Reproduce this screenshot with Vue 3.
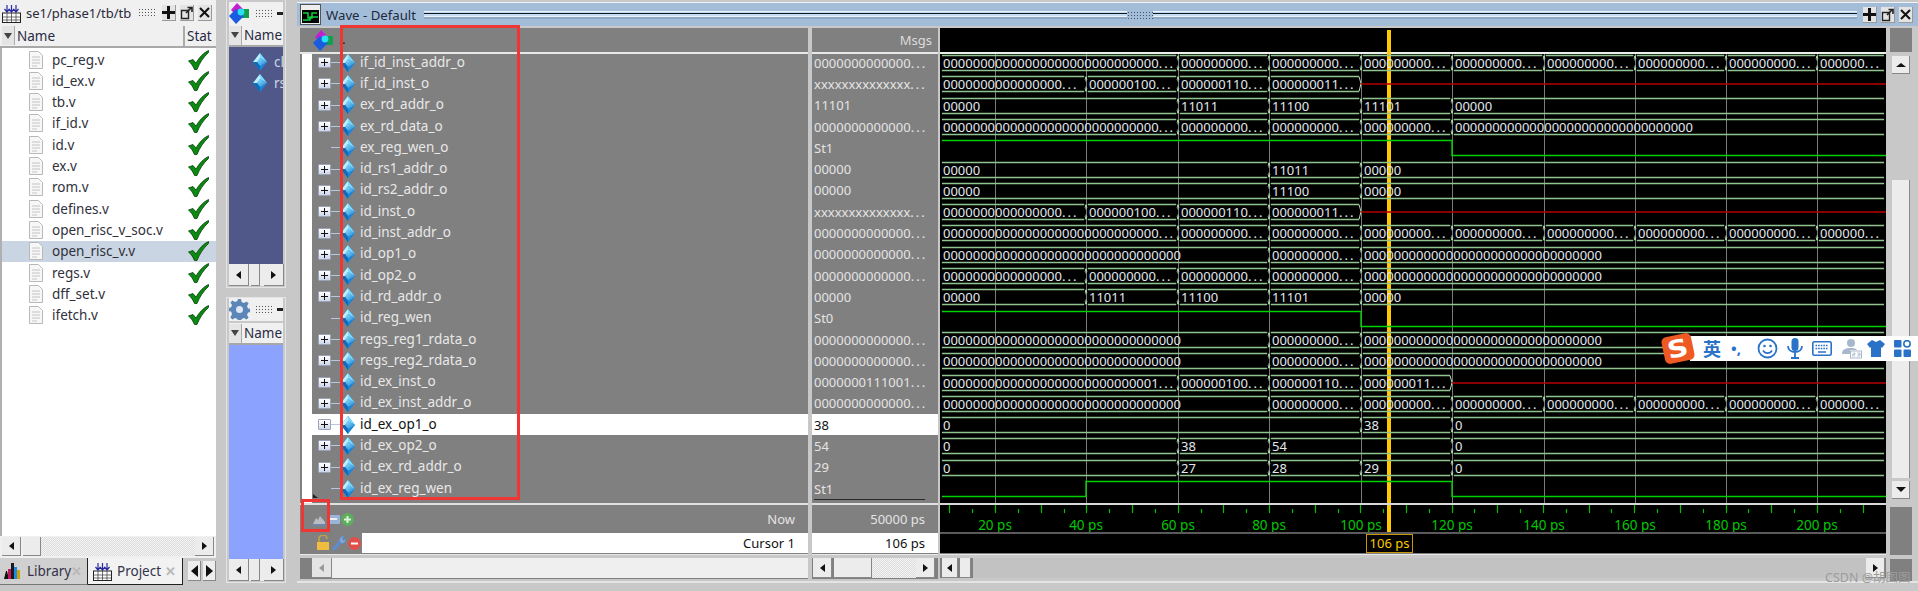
<script setup>
const X = { A: 940, B: 1086, C: 1178, D: 1269, E: 1361, F: 1452, G: 1544, H: 1635, I: 1726, J: 1817, Z: 1886 }
const z = (n) => '0'.repeat(n)
const e9 = z(9) + '...'
const e28 = z(29) + '...'
const e16 = z(16) + '...'
const full = z(32)
const valZ = z(13) + '...'
const valX = 'x'.repeat(14) + '...'

const addrSegs = [['A', e28], ['C', e9], ['D', e9], ['E', e9], ['F', e9], ['G', e9], ['H', e9], ['I', e9], ['J', '000000...']]
const instSegs = [['A', e16], ['B', '000000100...'], ['C', '000000110...'], ['D', '000000011...']]

const defs = [
  { name: 'if_id_inst_addr_o', val: valZ, segs: addrSegs },
  { name: 'if_id_inst_o', val: valX, segs: instSegs, red: 'E' },
  { name: 'ex_rd_addr_o', val: '11101', segs: [['A', '00000'], ['C', '11011'], ['D', '11100'], ['E', '11101'], ['F', '00000']] },
  { name: 'ex_rd_data_o', val: valZ, segs: [['A', e28], ['C', e9], ['D', e9], ['E', e9], ['F', full]] },
  { name: 'ex_reg_wen_o', val: 'St1', bit: [['A', 1], ['F', 0]] },
  { name: 'id_rs1_addr_o', val: '00000', segs: [['A', '00000'], ['D', '11011'], ['E', '00000']] },
  { name: 'id_rs2_addr_o', val: '00000', segs: [['A', '00000'], ['D', '11100'], ['E', '00000']] },
  { name: 'id_inst_o', val: valX, segs: instSegs, red: 'E' },
  { name: 'id_inst_addr_o', val: valZ, segs: addrSegs },
  { name: 'id_op1_o', val: valZ, segs: [['A', full], ['D', e9], ['E', full]] },
  { name: 'id_op2_o', val: valZ, segs: [['A', e16], ['B', e9], ['C', e9], ['D', e9], ['E', full]] },
  { name: 'id_rd_addr_o', val: '00000', segs: [['A', '00000'], ['B', '11011'], ['C', '11100'], ['D', '11101'], ['E', '00000']] },
  { name: 'id_reg_wen', val: 'St0', bit: [['A', 1], ['E', 0]] },
  { name: 'regs_reg1_rdata_o', val: valZ, segs: [['A', full], ['D', e9], ['E', full]] },
  { name: 'regs_reg2_rdata_o', val: valZ, segs: [['A', full], ['D', e9], ['E', full]] },
  { name: 'id_ex_inst_o', val: '0000000111001...', segs: [['A', z(28) + '1...'], ['C', '000000100...'], ['D', '000000110...'], ['E', '000000011...']], red: 'F' },
  { name: 'id_ex_inst_addr_o', val: valZ, segs: [['A', full], ['D', e9], ['E', e9], ['F', e9], ['G', e9], ['H', e9], ['I', e9], ['J', '000000...']] },
  { name: 'id_ex_op1_o', val: '38', sel: true, segs: [['A', '0'], ['E', '38'], ['F', '0']] },
  { name: 'id_ex_op2_o', val: '54', segs: [['A', '0'], ['C', '38'], ['D', '54'], ['F', '0']] },
  { name: 'id_ex_rd_addr_o', val: '29', segs: [['A', '0'], ['C', '27'], ['D', '28'], ['E', '29'], ['F', '0']] },
  { name: 'id_ex_reg_wen', val: 'St1', bit: [['A', 0], ['B', 1], ['F', 0]] }
]

function split(t) {
  return t.endsWith('...') ? { body: t.slice(0, -3), dots: '...' } : { body: t, dots: '' }
}

const rows = defs.map((d, i) => {
  const top = Math.round(55 + 21.3 * i) + 0.5
  const bot = top + 15
  const out = { ...d, key: d.name, valText: split(d.val), hasPlus: !d.bit }
  if (d.bit) {
    let p = ''
    d.bit.forEach(([k, v], j) => {
      const y = v ? top : bot
      const x1 = j === 0 ? X.A + 2 : X[k]
      const x2 = j === d.bit.length - 1 ? X.Z : X[d.bit[j + 1][0]]
      p += (j === 0 ? 'M' : 'L') + x1 + ' ' + y + ' L' + x2 + ' ' + y + ' '
    })
    out.bitPath = p
    return out
  }
  const end = d.red ? X[d.red] : X.Z
  let line = ''
  let tick = ''
  const labels = []
  d.segs.forEach(([k, text], j) => {
    const x1 = X[k]
    const x2 = j === d.segs.length - 1 ? end : X[d.segs[j + 1][0]]
    const l = x1 + 2
    line += `M${l} ${top} L${x2 - 2} ${top} M${l} ${bot} L${x2 - 2} ${bot} `
    if (j > 0) tick += `M${x1 - 1} ${top} L${x1 + 1} ${top + 3} M${x1 + 1} ${top} L${x1 - 1} ${top + 3} M${x1} ${top + 2} L${x1} ${top + 5} M${x1 - 1} ${bot} L${x1 + 1} ${bot - 3} M${x1 + 1} ${bot} L${x1 - 1} ${bot - 3} M${x1} ${bot - 2} L${x1} ${bot - 5} `
    labels.push({ x: x1 + 3, y: bot - 3, ...split(text) })
  })
  if (d.red) tick += `M${end - 2} ${top} L${end} ${top + 7} L${end - 2} ${bot} `
  out.line = line
  out.tick = tick
  out.labels = labels
  out.redPath = d.red ? `M${end} ${top + 7.5} L${X.Z} ${top + 7.5}` : ''
  return out
})

const files = ['pc_reg.v', 'id_ex.v', 'tb.v', 'if_id.v', 'id.v', 'ex.v', 'rom.v', 'defines.v', 'open_risc_v_soc.v', 'open_risc_v.v', 'regs.v', 'dff_set.v', 'ifetch.v']
const grid = [995, 1086, 1178, 1269, 1361, 1452, 1544, 1635, 1726, 1817]
const gridLabels = grid.map((x, i) => ({ x, text: (i + 1) * 20 + ' ps' }))
const ticks = []
for (let n = 0; n < 41; n++) ticks.push({ x: Math.round(949.4 + 22.83 * n) + 0.5, long: n % 2 === 0 })
</script>

<template>
  <div class="app">
    <svg class="defs" width="0" height="0" aria-hidden="true">
      <defs>
        <linearGradient id="dg" x1="0" y1="0" x2="1" y2="1">
          <stop offset="0" stop-color="#8fe4ff" />
          <stop offset="1" stop-color="#1d7fd0" />
        </linearGradient>
        <symbol id="diamond" viewBox="0 0 14 18">
          <path d="M7 0 L14 9 L7 18 L0 9Z" fill="#1a86d8" />
          <path d="M7 0 L14 9 L7 5Z" fill="#7edcff" />
          <path d="M7 0 L0 9 L4 9 L7 5Z" fill="#bdf0ff" />
          <path d="M4 9 L7 5 L14 9 L7 13Z" fill="url(#dg)" />
          <path d="M0 9 L7 18 L7 13 L4 9Z" fill="#0f6cb8" />
        </symbol>
        <symbol id="trio" viewBox="0 0 21 21">
          <path d="M8 0 L15 7 L8 13 L2 7Z" fill="#c020d0" />
          <rect x="10" y="6" width="10" height="9" fill="#12a050" />
          <path d="M7 6 L15 13 L7 21 L0 13Z" fill="#1a5ce0" />
          <circle cx="12" cy="9" r="3.4" fill="#27e0f0" />
        </symbol>
        <symbol id="plusb" viewBox="0 0 13 15">
          <path d="M5 1h3v5h5v3H8v5H5V9H0V6h5z" fill="#111" />
        </symbol>
        <symbol id="popb" viewBox="0 0 13 15">
          <path d="M1.5 5.5h7v8h-7z" fill="none" stroke="#222" stroke-width="1.4" />
          <path d="M6 8 L11 3 M7.5 2.5h4.5v4.5" fill="none" stroke="#222" stroke-width="1.6" />
        </symbol>
        <symbol id="xb" viewBox="0 0 13 15">
          <path d="M2 3 L11 12 M11 3 L2 12" fill="none" stroke="#111" stroke-width="2" />
        </symbol>
        <symbol id="check" viewBox="0 0 21 20">
          <path d="M0.5 11 L5 9.5 L8 13 C11 8 15 3 20.5 0.5 L20.5 2.5 C15.5 7 11.5 13 9 19.5 L6.5 19.5 C5 16 3 13 0.5 11Z" fill="#0b8a12" stroke="#063d08" stroke-width="0.8" />
        </symbol>
        <symbol id="file" viewBox="0 0 14 18">
          <path d="M.5.5h9l4 4v13H.5z" fill="#f7f7f7" stroke="#b9b9b9" />
          <path d="M3 6h8M3 9h8M3 12h8M3 15h5" stroke="#c4c4c4" />
        </symbol>
        <symbol id="proj" viewBox="0 0 19 19">
          <rect x=".5" y="9" width="18" height="9.5" fill="#fff" stroke="#222" />
          <path d="M.5 13h18M.5 16h18M5 9v9M9.5 9v9M14 9v9" stroke="#333" stroke-width=".7" />
          <path d="M5 1v6M2.5 5L5 8l2.5-3M14 1v6M11.5 5L14 8l2.5-3M9.5 1v6M7 5l2.5 3L12 5" fill="none" stroke="#2a2aa0" stroke-width="1.2" />
        </symbol>
      </defs>
    </svg>

    <!-- left project panel -->
    <section class="left">
      <div class="ptitle">
        <svg class="ticon" width="19" height="19"><use href="#proj" /></svg>
        <span class="ttext">se1/phase1/tb/tb</span>
        <span class="grip leftgrip"></span>
        <span class="wbtn"><svg width="13" height="15"><use href="#plusb" /></svg></span>
        <span class="wbtn"><svg width="13" height="15"><use href="#popb" /></svg></span>
        <span class="wbtn"><svg width="13" height="15"><use href="#xb" /></svg></span>
      </div>
      <div class="phead">
        <span class="sortbox"><i></i></span>
        <span class="hname hfull">Name</span>
        <span class="hname hstat">Stat</span>
      </div>
      <div class="flist">
        <div v-for="f in files" :key="f" class="frow" :class="{ fsel: f === 'open_risc_v.v' }">
          <svg class="ficon" width="14" height="18"><use href="#file" /></svg>
          <span class="fname">{{ f }}</span>
          <svg class="fcheck" width="21" height="20"><use href="#check" /></svg>
        </div>
      </div>
      <div class="hbar leftbar">
        <span class="sbtn"><i class="al"></i></span>
        <span class="thumb t18"></span>
        <span class="dither"></span>
        <span class="sbtn"><i class="ar"></i></span>
      </div>
      <div class="tabs">
        <div class="tab tlib">
          <svg width="19" height="18" viewBox="0 0 19 18">
            <path d="M1 17l2-8h1l2 8z" fill="#111" />
            <rect x="5" y="7" width="3" height="10" fill="#c2185b" />
            <rect x="8" y="1" width="3" height="16" fill="#1a1a1a" />
            <rect x="11" y="5" width="3" height="12" fill="#1e88e5" />
            <rect x="14" y="8" width="3" height="9" fill="#d4a000" />
          </svg>
          <span class="tname">Library</span>
          <span class="tclose">✕</span>
        </div>
        <div class="tab tproj">
          <svg width="19" height="19"><use href="#proj" /></svg>
          <span class="tname">Project</span>
          <span class="tclose">✕</span>
        </div>
        <div class="tabarrows">
          <span class="tarrow"><i class="al big"></i></span>
          <span class="tarrow"><i class="ar big"></i></span>
        </div>
      </div>
    </section>

    <!-- middle column -->
    <section class="mid">
      <div class="mpanel top">
        <div class="ptitle mtitle">
          <svg width="21" height="21"><use href="#trio" /></svg>
          <span class="grip midgrip"></span>
          <span class="minib"></span>
        </div>
        <div class="phead mhead">
          <span class="sortbox"><i></i></span>
          <span class="hname hfull">Name</span>
        </div>
        <div class="navy">
          <div class="mrow"><svg width="18" height="18"><use href="#diamond" /></svg><span>clk</span></div>
          <div class="mrow"><svg width="18" height="18"><use href="#diamond" /></svg><span>rst</span></div>
        </div>
        <div class="hbar midbar">
          <span class="sbtn"><i class="al"></i></span>
          <span class="thumb t8"></span>
          <span class="sbtn"><i class="ar"></i></span>
        </div>
      </div>
      <div class="mpanel bottom">
        <div class="ptitle mtitle">
          <svg width="21" height="21" viewBox="0 0 21 21">
            <path d="M9 0h3l.6 3 2.4 1 2.6-1.6 2 2L18 7l1 2.400 3 .6v3l-3 .6-1 2.400 1.600 2.600-2 2-2.600-1.600-2.400 1-.6 3H9l-.6-3-2.400-1-2.600 1.600-2-2L3 15l-1-2.400-3-.6V9l3-.6L3 6 1.400 3.400l2-2L6 3l2.400-1z" fill="#5d86b8" />
            <circle cx="10.500" cy="10.500" r="3.500" fill="#dde8f4" />
          </svg>
          <span class="grip midgrip"></span>
          <span class="minib"></span>
        </div>
        <div class="phead mhead low">
          <span class="sortbox"><i></i></span>
          <span class="hname hfull">Name</span>
        </div>
        <div class="periwinkle"></div>
        <div class="hbar midbar">
          <span class="sbtn"><i class="al"></i></span>
          <span class="thumb t8"></span>
          <span class="sbtn"><i class="ar"></i></span>
        </div>
      </div>
    </section>

    <!-- wave window -->
    <section class="wavewin">
      <div class="wtitle">
        <svg class="wicon" width="21" height="21" viewBox="0 0 21 21">
          <rect x=".5" y=".5" width="20" height="20" fill="#eee" stroke="#555" />
          <rect x="2" y="6" width="17" height="13" fill="#000" />
          <path d="M3 9h5v5h4V9h5M3 16h7v-3h8" fill="none" stroke="#10d040" stroke-width="1.500" />
        </svg>
        <span class="wtext">Wave - Default</span>
        <span class="stripes"><span class="stripegrip"></span></span>
        <span class="wbtn"><svg width="13" height="15"><use href="#plusb" /></svg></span>
        <span class="wbtn"><svg width="13" height="15"><use href="#popb" /></svg></span>
        <span class="wbtn"><svg width="13" height="15"><use href="#xb" /></svg></span>
      </div>
      <div class="wbody">
        <div class="col cnames">
          <div class="chead">
            <svg width="21" height="21"><use href="#trio" /></svg>
            <span class="rootdots">..</span>
          </div>
          <div class="crows nrows">
            <div v-for="r in rows" :key="r.key" class="nrow" :class="{ sel: r.sel }">
              <span class="plus" :class="{ hide: !r.hasPlus }"></span>
              <span class="conn"></span>
              <svg class="dia" width="14" height="18"><use href="#diamond" /></svg>
              <span class="nname">{{ r.name }}</span>
            </div>
            <span class="simarrow"></span>
          </div>
          <div class="cline"></div>
          <div class="cnow">
            <span class="nicons">
              <svg width="14" height="14" viewBox="0 0 14 14"><path d="M1 12l3-6 2 2 2-4 5 6v2z" fill="#b8bcc4" /><path d="M0 13h14" stroke="#5d8ed0" /></svg>
              <svg width="13" height="13" viewBox="0 0 13 13"><rect x="0" y="2" width="13" height="9" rx="1" fill="#9ab4d8" /><path d="M2 6h8" stroke="#eee" stroke-width="2" /></svg>
              <svg width="13" height="13" viewBox="0 0 13 13"><circle cx="6.500" cy="6.500" r="6.500" fill="#5cae5c" /><path d="M6.500 3v7M3 6.500h7" stroke="#dff3da" stroke-width="2" /></svg>
            </span>
            <span class="nowlabel">Now</span>
          </div>
          <div class="ccursor">
            <span class="cicons">
              <svg width="14" height="16" viewBox="0 0 14 16"><path d="M3 7V4a4 4 0 0 1 8 0" fill="none" stroke="#c8a040" stroke-width="1.600" /><rect x="1" y="7" width="12" height="8" fill="#f0bc40" /></svg>
              <svg width="14" height="16" viewBox="0 0 14 16"><path d="M2 14 L9 6" fill="none" stroke="#5b8ed0" stroke-width="3" stroke-linecap="round" /><path d="M8 6.500a3.500 3.500 0 0 1 4-5l-2 2.500 2 1.500 1.500-2a3.500 3.500 0 0 1-4.500 4.500z" fill="#8aa8d8" stroke="#5b8ed0" stroke-width=".8" /></svg>
              <svg width="13" height="13" viewBox="0 0 13 13"><circle cx="6.500" cy="6.500" r="6.500" fill="#e0504a" /><path d="M3 6.500h7" stroke="#fff" stroke-width="2" /></svg>
            </span>
            <span class="cursorinput">Cursor 1</span>
          </div>
          <div class="cgap"></div>
          <div class="hbar namebar">
            <span class="sbtn dim"><i class="al gray"></i></span>
            <span class="plain"></span>
          </div>
        </div>

        <div class="col cvalues">
          <div class="chead msgs">Msgs</div>
          <div class="crows vrows">
            <div v-for="r in rows" :key="r.key" class="vrow" :class="{ sel: r.sel }">{{ r.valText.body }}<span v-if="r.valText.dots" class="dots">...</span></div>
            <span class="vend"></span>
          </div>
          <div class="cline"></div>
          <div class="cnow vnow">50000 ps</div>
          <div class="ccursor vcur">106 ps</div>
          <div class="cgap"></div>
          <div class="hbar valbar">
            <span class="sbtn"><i class="al"></i></span>
            <span class="thumb t40"></span>
            <span class="dither"></span>
            <span class="sbtn"><i class="ar"></i></span>
          </div>
        </div>

        <div class="col cwave">
          <svg class="wavesvg" width="946" height="525" viewBox="940 28 946 525">
            <rect x="940" y="28" width="946" height="525" fill="#000" />
            <rect x="940" y="52" width="946" height="2" fill="#e8f2e8" />
            <line v-for="g in grid" :key="g" :x1="g + 0.5" :x2="g + 0.5" y1="54" y2="503" stroke="#7a7a7a" />
            <rect x="1387" y="30" width="4" height="503" fill="#ffc800" />
            <g v-for="r in rows" :key="r.key">
              <path v-if="r.bitPath" :d="r.bitPath" fill="none" stroke="#00d000" stroke-width="1.400" />
              <template v-else>
                <path :d="r.line" fill="none" stroke="#8fc48f" stroke-width="1.600" />
                <path :d="r.tick" fill="none" stroke="#b5e0b5" stroke-width="1" />
                <path v-if="r.redPath" :d="r.redPath" fill="none" stroke="#b80000" stroke-width="1.600" />
                <text v-for="l in r.labels" :key="l.x" :x="l.x" :y="l.y" class="wlabel">{{ l.body }}<tspan v-if="l.dots" class="wdots">...</tspan></text>
              </template>
            </g>
            <rect x="940" y="503" width="946" height="2" fill="#d8d8d8" />
            <line v-for="t in ticks" :key="t.x" :x1="t.x" :x2="t.x" :y1="t.long ? 505 : 509" y2="513" stroke="#00c000" stroke-width="1.200" />
            <text v-for="g in gridLabels" :key="g.text" :x="g.x" y="530" text-anchor="middle" class="rlabel">{{ g.text }}</text>
            <rect x="940" y="532" width="946" height="2" fill="#5a5a5a" />
            <rect x="1366.500" y="534.500" width="46" height="18" fill="#000" stroke="#c8980c" />
            <text x="1389.500" y="548" text-anchor="middle" class="clabel">106 ps</text>
          </svg>
          <div class="cgap"></div>
          <div class="hbar wavebar">
            <span class="sbtn w16"><i class="al"></i></span>
            <span class="thumb t12"></span>
            <span class="plain graytrack"></span>
            <span class="sbtn"><i class="ar"></i></span>
          </div>
        </div>

        <div class="col cscroll">
          <div class="sctop"></div>
          <div class="sctrack">
            <span class="vbtn"><i class="au"></i></span>
            <span class="vspace"></span>
            <span class="vthumb"></span>
            <span class="vbtn"><i class="ad"></i></span>
          </div>
          <div class="scgray"></div>
          <div class="scgray2"></div>
        </div>
      </div>
      <div class="wfoot"></div>
    </section>

    <!-- overlays -->
    <div class="redbox rb1"></div>
    <div class="redbox rb2"></div>

    <div class="ime">
      <span class="imelogo"><b>S</b></span>
      <span class="imebar">
        <span class="imeying">英</span>
        <span class="imepunct">•,</span>
        <svg width="21" height="21" viewBox="0 0 21 21"><circle cx="10.500" cy="10.500" r="9" fill="none" stroke="#2a72c8" stroke-width="1.800" /><circle cx="7.500" cy="8" r="1.300" fill="#2a72c8" /><circle cx="13.500" cy="8" r="1.300" fill="#2a72c8" /><path d="M6 12.500c2 3.500 7 3.500 9 0" fill="none" stroke="#2a72c8" stroke-width="1.600" /></svg>
        <svg width="16" height="21" viewBox="0 0 16 21"><rect x="4.500" y="0" width="7" height="13" rx="3.500" fill="#2a72c8" /><path d="M1 8c0 8 14 8 14 0M8 14.500V19M4 20h8" fill="none" stroke="#2a72c8" stroke-width="1.800" /></svg>
        <svg width="20" height="15" viewBox="0 0 20 15"><rect x=".8" y=".8" width="18.400" height="13.400" rx="1.500" fill="none" stroke="#2a72c8" stroke-width="1.600" /><path d="M3.500 4.500h13M3.500 7.500h13" stroke="#2a72c8" stroke-width="1.500" stroke-dasharray="1.600 1" /><path d="M6 11h8" stroke="#2a72c8" stroke-width="1.500" /></svg>
        <svg class="imeperson" width="21" height="21" viewBox="0 0 21 21"><circle cx="10" cy="5" r="4" fill="#a8b8cc" /><path d="M1 16c0-5 4-6 9-6 3 0 5 .5 6 2H9v4z" fill="#a8b8cc" /><rect x="9.500" y="13" width="11" height="7" fill="#fff" stroke="#a8b8cc" /><path d="M11.500 15h2.500v1.500h-2.500V18H14M16 15h3v1.500h-2M19 16.500V18h-3" fill="none" stroke="#a8b8cc" stroke-width=".8" /></svg>
        <svg width="18" height="17" viewBox="0 0 18 17"><path d="M5 0 L9 2 L13 0 L18 4 L15 8 L14 7 V17 H4 V7 L3 8 L0 4Z" fill="#2a72c8" /></svg>
        <svg width="17" height="17" viewBox="0 0 17 17"><rect x="0" y="0" width="7.500" height="7.500" rx="1" fill="#2a72c8" /><circle cx="13" cy="3.800" r="3.200" fill="none" stroke="#2a72c8" stroke-width="1.600" /><rect x="0" y="9.500" width="7.500" height="7.500" rx="1" fill="#2a72c8" /><rect x="9.500" y="9.500" width="7.500" height="7.500" rx="1" fill="#2a72c8" /></svg>
      </span>
    </div>

    <div class="watermark">CSDN @胡图图</div>
  </div>
</template>

<style>
html, body { margin: 0; padding: 0; background: #c8c8c8; }
</style>

<style scoped>
.app {
  position: relative;
  display: flex;
  width: 1918px;
  height: 591px;
  overflow: hidden;
  background: #c8c8c8;
  font-family: "Noto Sans", "Open Sans", sans-serif;
  font-size: 13px;
  color: #333;
}
.defs { position: absolute; }
svg { display: block; flex: none; }
i { display: block; }

/* shared chrome */
.ptitle {
  display: flex;
  align-items: center;
  height: 23px;
  margin-top: 2px;
  background: #f0f0f0;
  padding-left: 2px;
}
.ticon { margin-right: 5px; }
.ttext { font-size: 13px; color: #2a2a3a; white-space: nowrap; }
.grip {
  display: block;
  height: 10px;
  background-image: radial-gradient(circle, #555 0.8px, transparent 1px);
  background-size: 3px 3px;
}
.leftgrip { width: 20px; margin: 0 6px 0 7px; }
.wbtn {
  display: flex;
  width: 13px;
  height: 15px;
  background: #e4e4e4;
  border-right: 1px solid #999;
  border-bottom: 1px solid #999;
  margin-right: 4px;
}
.phead {
  display: flex;
  align-items: center;
  height: 22px;
  background: #f0f0f0;
  border-bottom: 2px solid #a8a8a8;
  box-sizing: border-box;
  margin-top: 1px;
}
.sortbox {
  display: flex;
  align-items: center;
  justify-content: center;
  flex: none;
  width: 12px;
  height: 19px;
  margin-left: 2px;
  background: #e4e4e4;
  border-right: 1px solid #aaa;
}
.sortbox i {
  width: 0;
  height: 0;
  border-left: 4px solid transparent;
  border-right: 4px solid transparent;
  border-top: 6px solid #444;
}
.hname { font-size: 13.5px; color: #2a2a44; padding-left: 2px; white-space: nowrap; overflow: hidden; }
.hfull { flex: 1; }
.hstat { width: 29px; flex: none; border-left: 2px solid #aaa; height: 20px; line-height: 20px; }

/* left panel */
.left {
  display: flex;
  flex-direction: column;
  flex: none;
  width: 216px;
  height: 586px;
  background: #f0f0f0;
}
.left .ptitle { margin-top: 2px; }
.left .phead > .hfull { height: 20px; line-height: 20px; }
.flist {
  height: 489px;
  padding-top: 1px;
  box-sizing: border-box;
  background: #fff;
  border-left: 2px solid #b0b0b0;
}
.frow {
  display: flex;
  align-items: center;
  height: 21.3px;
  padding-left: 27px;
}
.fsel { background: #c9d5e2; }
.fname { flex: 1; padding-left: 9px; font-size: 13.5px; color: #30303a; white-space: nowrap; }
.fcheck { margin-right: 7px; }

.hbar { display: flex; align-items: stretch; }
.sbtn {
  display: flex;
  align-items: center;
  justify-content: center;
  flex: none;
  width: 19px;
  background: #ececec;
  border-right: 1px solid #888;
  border-bottom: 1px solid #888;
  box-sizing: border-box;
}
.sbtn.w16 { width: 16px; }
.al, .ar, .au, .ad { width: 0; height: 0; }
.al { border-top: 4px solid transparent; border-bottom: 4px solid transparent; border-right: 5px solid #111; }
.ar { border-top: 4px solid transparent; border-bottom: 4px solid transparent; border-left: 5px solid #111; }
.al.gray { border-right-color: #999; }
.al.big { border-top-width: 6px; border-bottom-width: 6px; border-right-width: 7px; }
.ar.big { border-top-width: 6px; border-bottom-width: 6px; border-left-width: 7px; }
.thumb {
  flex: none;
  background: #ececec;
  border-right: 1px solid #888;
  border-bottom: 1px solid #888;
  box-sizing: border-box;
  margin-left: 2px;
}
.t18 { width: 18px; }
.t8 { width: 9px; }
.t40 { width: 38px; }
.t12 { width: 11px; }
.dither {
  flex: 1;
  background: repeating-conic-gradient(#dcdcdc 0 25%, #f4f4f4 0 50%) 0 0 / 2px 2px;
}
.plain { flex: 1; background: #efefef; }
.graytrack { background: #c2c2c2; margin-left: 2px; }

.leftbar { height: 19px; margin-top: 1px; padding: 0 2px; background: #f0f0f0; }
.tabs {
  display: flex;
  height: 28px;
  margin-top: 2px;
  background: #c8c8c8;
}
.tab {
  display: flex;
  align-items: center;
  height: 27px;
  box-sizing: border-box;
}
.tlib { width: 88px; padding-left: 3px; background: #d0d0d0; border-right: 1px solid #222; border-bottom: 1px solid #777; }
.tproj { width: 98px; padding-left: 5px; background: #f2f2f2; border-right: 1px solid #222; border-bottom: 1px solid #222; }
.tname { font-size: 13.5px; color: #33334a; padding-left: 5px; flex: 1; }
.tclose { font-size: 13px; font-weight: 700; color: #b8b8b8; padding-right: 6px; }
.tabarrows { display: flex; gap: 2px; padding: 3px 0 0 5px; }
.tarrow {
  display: flex;
  align-items: center;
  justify-content: center;
  width: 12px;
  height: 19px;
  background: #eee;
  border-right: 1px solid #888;
  border-bottom: 1px solid #888;
}

/* middle column */
.mid {
  display: flex;
  flex-direction: column;
  flex: none;
  width: 60px;
  margin-left: 10px;
  height: 586px;
}
.mpanel {
  padding: 0 2px;
  box-sizing: border-box;
  border: 1px solid #e4e4e4;
  border-top: 0;
  overflow: hidden;
}
.mpanel.top { height: 288px; flex: none; }
.mpanel.bottom { height: 286px; flex: none; margin-top: 9px; border-top: 1px solid #e4e4e4; }
.mtitle { padding-left: 0; margin-top: 0; overflow: hidden; }
.mpanel.top .mtitle { margin-top: 2px; }
.midgrip { width: 22px; margin: 0 5px; }
.minib { display: block; flex: none; width: 6px; height: 3px; background: #222; }
.mhead .sortbox { margin-left: 0; }
.mhead { margin-top: 0; }
.mhead.low { margin-top: 2px; }
.navy {
  height: 217px;
  box-sizing: border-box;
  padding-top: 4px;
  background: #4f5889;
}
.mrow {
  display: flex;
  align-items: center;
  height: 21.3px;
  padding-left: 22px;
  color: #d0d6e4;
  font-size: 13.500px;
  white-space: nowrap;
  overflow: hidden;
}
.mrow span { padding-left: 5px; }
.periwinkle { height: 214px; background: #8ca2ff; }
.midbar { height: 22px; background: #ececec; }
.midbar .sbtn { width: 20px; }
.midbar .thumb { margin-right: 4px; }

/* wave */
.wavewin {
  flex: none;
  width: 1621px;
  height: 583px;
  margin-left: 11px;
  box-sizing: border-box;
  display: flex;
  flex-direction: column;
  margin-top: 1px;
}
.wtitle {
  display: flex;
  align-items: center;
  height: 24px;
  margin-top: 1px;
  padding: 0 2px 0 3px;
  background: #a3bdd9;
  border-top: 1px solid #f0f4f8;
  box-sizing: border-box;
}
.wicon { margin-right: 5px; }
.wtext { font-size: 13.2px; color: #1e2a3c; white-space: nowrap; }
.stripes {
  display: flex;
  justify-content: center;
  align-items: center;
  flex: 1;
  height: 8px;
  margin: 0 5px 0 8px;
  background: linear-gradient(#eaf2fa 0 1px, #c0d8f0 1px 2px, #0c1824 2px 3.500px, #c8dcf0 3.500px 5px, #eaf2fa 5px 6px, #90a8c8 6px 8px);
}
.stripegrip {
  display: block;
  width: 26px;
  height: 8px;
  background-color: #a3bdd9;
  background-image: radial-gradient(circle, #456 0.7px, transparent 0.9px);
  background-size: 3px 3px;
}
.wtitle .wbtn { margin-right: 3px; margin-left: 1px; }
.wbody {
  display: flex;
  padding: 2px 0 0 3px;
  height: 553px;
  box-sizing: border-box;
}
.col { display: flex; flex-direction: column; flex: none; }
.cnames { width: 508px; background: #808080; }
.cvalues { width: 126px; margin-left: 4px; background: #808080; }
.cwave { width: 946px; margin-left: 2px; }
.cscroll { width: 22px; margin-left: 4px; }

.chead {
  display: flex;
  align-items: center;
  height: 24px;
  flex: none;
  padding-left: 13px;
  background: #808080;
}
.rootdots { color: #111; padding-left: 5px; font-size: 12px; line-height: 10px; }
.msgs { justify-content: flex-end; padding: 0 6px 0 0; color: #dcdcdc; font-size: 13px; }
.crows { position: relative; height: 451px; flex: none; box-sizing: border-box; box-shadow: inset 0 2px #e8e8e8; }
.nrows {
  background: linear-gradient(90deg, #808080 0 2px, #fff 2px 12px, #808080 12px);
  padding-left: 12px;
}
.nrow {
  display: flex;
  align-items: center;
  height: 21.3px;
  color: #e8e8e8;
  white-space: nowrap;
}
.nrow.sel { background: #fff; color: #111; }
.plus {
  position: relative;
  display: block;
  flex: none;
  width: 13px;
  height: 11px;
  margin-left: 6px;
  box-sizing: border-box;
  background: linear-gradient(#fff, #cfd6ea);
  border: 1px solid #9aa2b8;
  border-radius: 1px;
}
.plus::before, .plus::after { content: ""; position: absolute; background: #111; }
.plus::before { left: 2px; right: 2px; top: 4px; height: 1px; }
.plus::after { top: 1px; bottom: 1px; left: 5px; width: 1px; }
.plus.hide { visibility: hidden; }
.conn { display: block; flex: none; width: 10px; height: 1px; background: #b8c8dc; }
.nname { padding: 0 0 2px 5px; font-size: 13.5px; }
.simarrow {
  position: absolute;
  left: 13px;
  bottom: 5px;
  width: 0;
  height: 0;
  border-top: 4px solid transparent;
  border-bottom: 0 solid transparent;
  border-left: 5px solid #222;
}
.vrows { padding-left: 2px; }
.vrow {
  display: flex;
  align-items: center;
  height: 21.3px;
  margin-left: -2px;
  padding-left: 2px;
  color: #e4e4e4;
  font-size: 13px;
  white-space: nowrap;
}
.vrow.sel { background: #fff; color: #111; }
.dots { letter-spacing: 2px; }
.vend { position: absolute; left: 2px; right: 13px; top: 447px; height: 1px; background: #2a2a2a; }
.cline { height: 2px; flex: none; background: #e0e0e0; }
.cnow {
  display: flex;
  align-items: center;
  justify-content: space-between;
  height: 28px;
  flex: none;
  padding-right: 13px;
  color: #e4e4e4;
  box-sizing: border-box;
}
.nicons { display: flex; align-items: center; gap: 1px; padding-left: 12px; }
.ccursor {
  display: flex;
  align-items: stretch;
  height: 20px;
  flex: none;
}
.cicons { display: flex; align-items: center; gap: 2px; padding-left: 16px; width: 46px; flex: none; box-sizing: content-box; }
.cursorinput {
  flex: 1;
  background: #fff;
  color: #111;
  text-align: right;
  padding-right: 13px;
  line-height: 20px;
}
.vnow { justify-content: flex-end; }
.vcur { justify-content: flex-end; align-items: center; background: #fff; color: #111; padding-right: 13px; }
.cgap { height: 5px; flex: none; background: linear-gradient(#808080 0 1px, #e8e8e8 1px 2px, #c8c8c8 2px); }
.namebar { height: 20px; padding-left: 12px; background: #808080; }
.namebar .sbtn { width: 20px; background: #e4e4e4; }
.valbar { height: 20px; padding: 0 3px 0 1px; background: #808080; }
.wavebar { height: 20px; padding: 0 1px 0 2px; background: #808080; }
.wavesvg { flex: none; }
.wlabel { font-size: 13px; fill: #e2e8ee; }
.wdots { letter-spacing: 2px; }
.rlabel { font-size: 13.500px; fill: #00c800; }
.clabel { font-size: 13px; fill: #ffc800; }

.sctop { height: 24px; flex: none; background: #808080; }
.sctrack {
  display: flex;
  flex-direction: column;
  height: 451px;
  flex: none;
  box-sizing: border-box;
  padding: 4px 2px 0;
  background: #c8c8c8;
}
.vbtn {
  display: flex;
  align-items: center;
  justify-content: center;
  height: 18px;
  flex: none;
  background: #ececec;
  border-right: 1px solid #888;
  border-bottom: 1px solid #888;
  box-sizing: border-box;
}
.au { border-left: 5px solid transparent; border-right: 5px solid transparent; border-bottom: 4px solid #111; }
.ad { border-left: 5px solid transparent; border-right: 5px solid transparent; border-top: 5px solid #111; }
.vspace { height: 106px; flex: none; }
.vthumb { height: 298px; flex: none; background: #ececec; border-right: 1px solid #888; box-sizing: border-box; margin-bottom: 3px; }
.scgray { height: 48px; flex: none; margin-top: 4px; background: #808080; }
.scgray2 { height: 23px; flex: none; margin-top: 4px; background: #808080; }
.wfoot { height: 2px; margin-top: 2px; background: #e4e4e4; }

/* overlays */
.redbox { position: absolute; border: 3px solid #f03535; box-sizing: border-box; pointer-events: none; }
.rb1 { left: 340px; top: 25px; width: 180px; height: 475px; }
.rb2 { left: 301px; top: 499px; width: 29px; height: 33px; }

.ime { position: absolute; left: 1662px; top: 331px; display: flex; align-items: center; height: 34px; }
.imelogo {
  position: relative;
  z-index: 1;
  display: flex;
  align-items: center;
  justify-content: center;
  width: 30px;
  height: 27px;
  margin-left: 1px;
  background: #ef5a24;
  border-radius: 5px;
  transform: rotate(-12deg);
}
.imelogo b { color: #fff; font-size: 24px; line-height: 24px; font-family: "DejaVu Sans", sans-serif; transform: scaleX(1.2); }
.imebar {
  display: flex;
  align-items: center;
  width: 228px;
  height: 25px;
  margin-left: -3px;
  padding-left: 13px;
  gap: 9px;
  box-sizing: border-box;
  background: #fff;
}
.imeying { font-family: "Noto Sans CJK SC", sans-serif; font-size: 18px; font-weight: 700; color: #2a72c8; margin-right: 1px; }
.imepunct { font-size: 15px; font-weight: 700; color: #2a72c8; width: 17px; }
.imeperson { margin-right: -4px; }
.watermark {
  position: absolute;
  left: 1825px;
  top: 567px;
  font-family: "Noto Sans", "Noto Sans CJK SC", sans-serif;
  font-size: 12.500px;
  color: #9c9c9c;
  white-space: nowrap;
}
</style>
